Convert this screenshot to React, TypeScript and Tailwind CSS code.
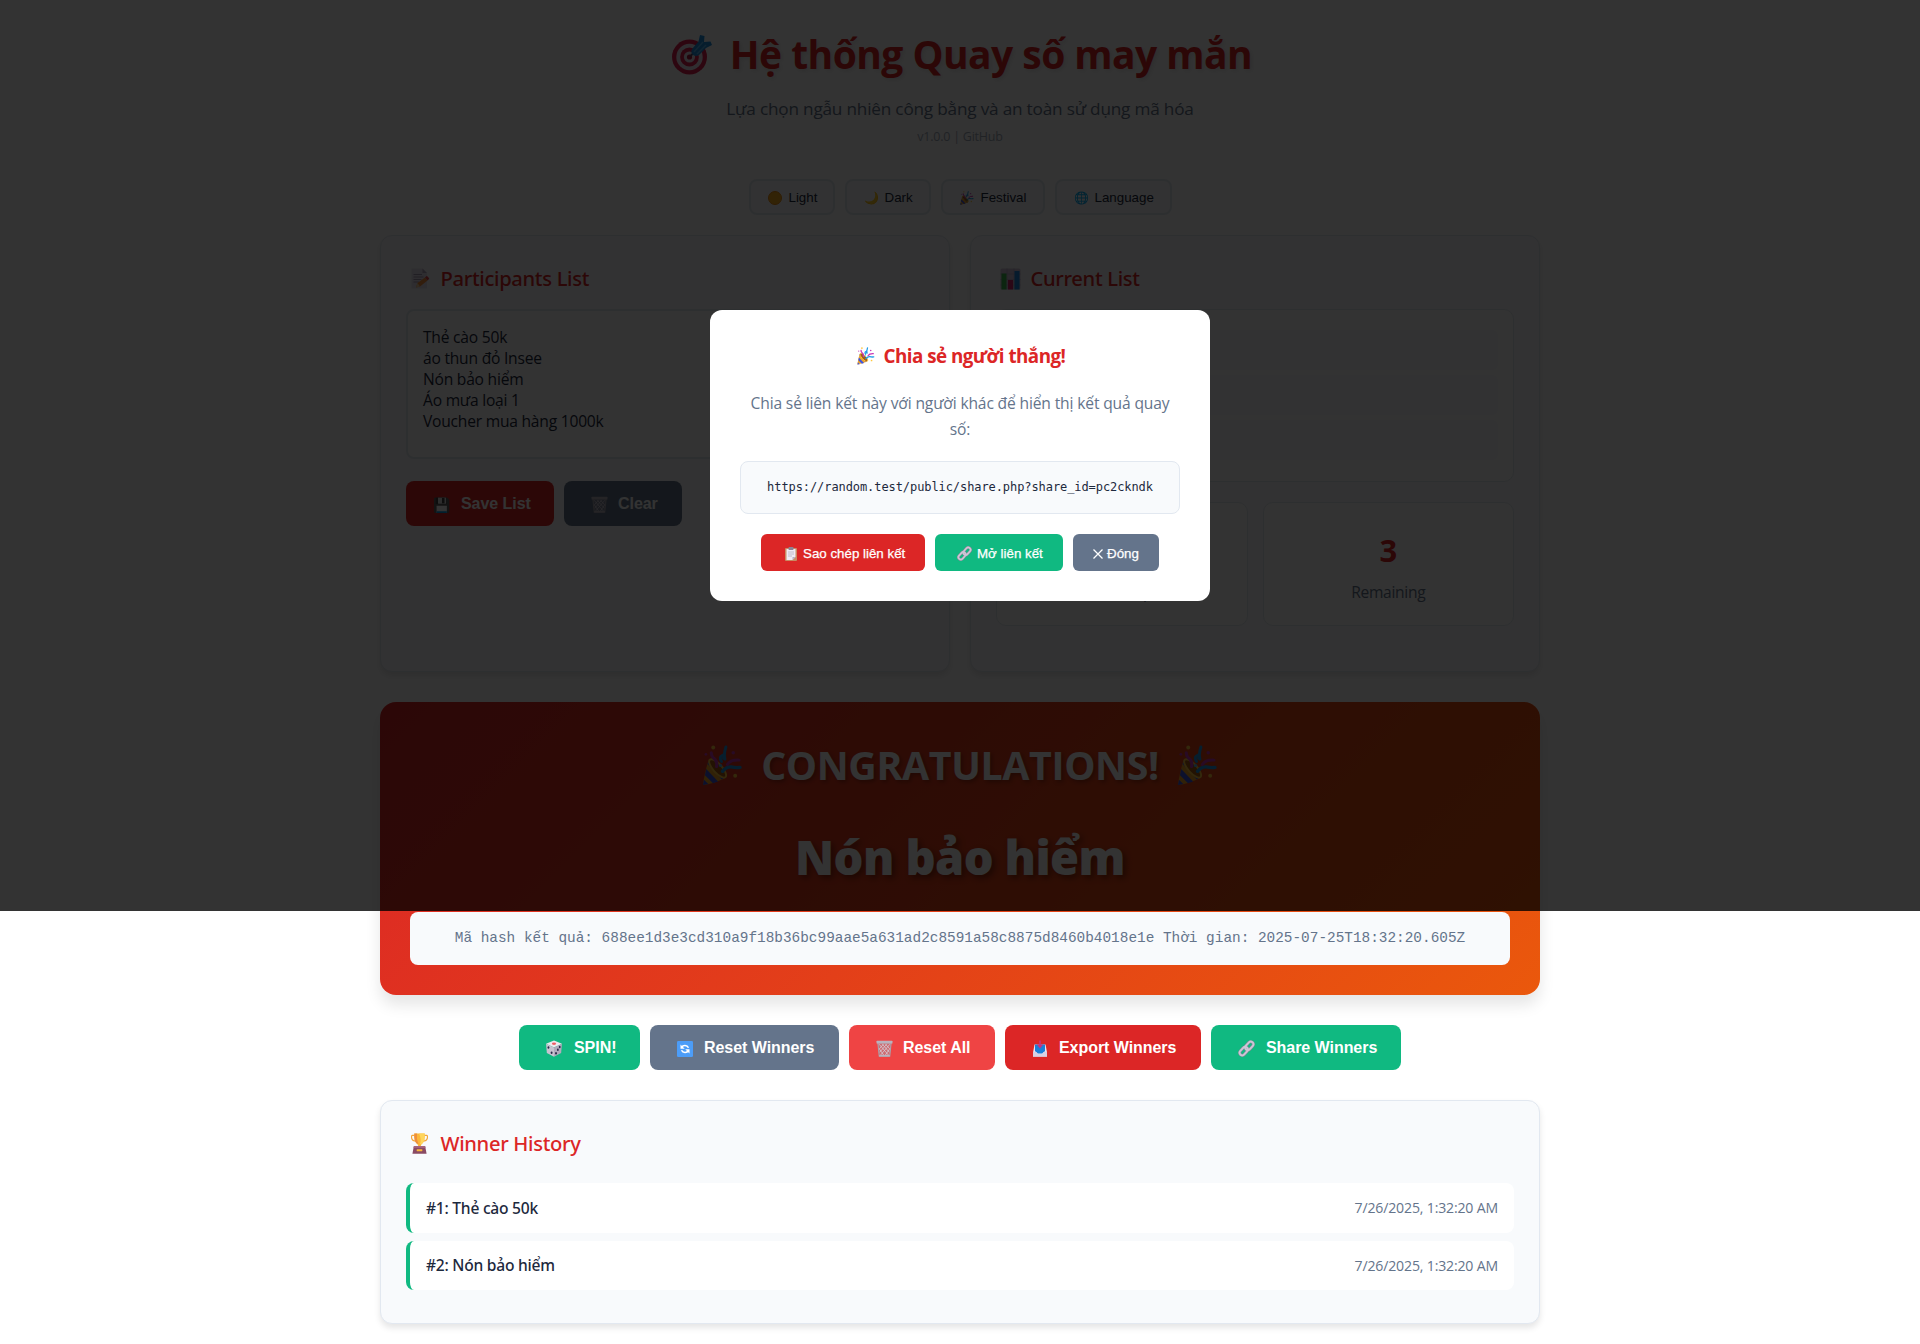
import type { ReactNode } from 'react'

const ui = "font-['Open_Sans','Noto_Sans',sans-serif]"
const arial = "font-['Liberation_Sans',Arial,sans-serif]"

function LinkIcon({ size = 16 }: { size?: number }) {
  return (
    <svg width={size} height={size} viewBox="0 0 32 32" fill="none" strokeLinecap="round">
      <g stroke="#8d8797" strokeWidth="5.6">
        <rect x="1.5" y="11" width="18" height="10" rx="5" transform="rotate(-48 10.5 16) translate(-3.5 3.5)" />
        <rect x="12.5" y="11" width="18" height="10" rx="5" transform="rotate(-48 21.5 16) translate(3.5 -3.5)" />
      </g>
      <g stroke="#cdc6d6" strokeWidth="3.6">
        <rect x="1.5" y="11" width="18" height="10" rx="5" transform="rotate(-48 10.5 16) translate(-3.5 3.5)" />
        <rect x="12.5" y="11" width="18" height="10" rx="5" transform="rotate(-48 21.5 16) translate(3.5 -3.5)" />
      </g>
    </svg>
  )
}

function TrashIcon({ size = 17 }: { size?: number }) {
  return (
    <svg width={size} height={size} viewBox="0 0 32 32" fill="none">
      <path d="M3.5 5h25l-2.6 25.5H6.1z" fill="#a39daa" fillOpacity=".45" stroke="#a8a3ad" strokeWidth="2" />
      <path d="M6 8l18 21M12 8l13 15M6.5 17l9 13M26 8L8 29M20 8L7 23M25.5 17l-9 13M18 8l8 9M14 8l-8 9" stroke="#d5d0da" strokeWidth="1.4" />
      <rect x="1" y="1.5" width="30" height="5" rx="1" fill="#b9b3bf" />
      <rect x="6" y="28" width="20" height="3" rx="1" fill="#b9b3bf" />
    </svg>
  )
}

function DiceIcon() {
  return (
    <svg width="18" height="17" viewBox="0 0 34 32">
      <path d="M17 1l15 6-15 7L2 7z" fill="#ece8ee" />
      <path d="M2 7l15 7v17.5L3.5 24.5z" fill="#c9c2d0" />
      <path d="M32 7l-15 7v17.5L30.5 24.5z" fill="#b2aabc" />
      <ellipse cx="17" cy="7" rx="4" ry="2.2" fill="#ef5b62" />
      <g fill="#2c2a4a">
        <ellipse cx="6.5" cy="14" rx="1.8" ry="2.4" />
        <ellipse cx="12.5" cy="24" rx="1.8" ry="2.4" />
        <ellipse cx="27.8" cy="13" rx="1.7" ry="2.3" />
        <ellipse cx="24.3" cy="18.5" rx="1.7" ry="2.3" />
        <ellipse cx="20.8" cy="25" rx="1.7" ry="2.3" />
      </g>
    </svg>
  )
}

function RefreshIcon() {
  return (
    <svg width="16" height="16" viewBox="0 0 32 32" fill="none">
      <rect width="32" height="32" rx="2.5" fill="#4c9df8" />
      <path d="M9.5 12.5C12 8 20 7.5 23 13.5M22.5 19.5C20 24 12 24.5 9 18.5" stroke="#fff" strokeWidth="3.2" />
      <path d="M7 7v8.5h8.5zM25 25v-8.5h-8.5z" fill="#fff" />
    </svg>
  )
}

function InboxIcon() {
  return (
    <svg width="14" height="17" viewBox="0 0 28 34">
      <path d="M3 9h22l3 16v8H0v-8z" fill="#e9e4f0" />
      <path d="M4 9h20v13l-5 5H9l-5-5z" fill="#1b7fd8" />
      <path d="M0 24h7l3 4h8l3-4h7v9.5H0z" fill="#d8d0e3" />
      <path d="M12.3 1h3.4v8h4.8L14 17 7.5 9h4.8z" fill="#c7327c" />
    </svg>
  )
}

function ClipboardIcon() {
  return (
    <svg width="12" height="14" viewBox="0 0 24 28">
      <rect x="0" y="2" width="24" height="26" rx="2" fill="#c98a62" />
      <path d="M3 4h18v16l-6 6H3z" fill="#efeaf4" />
      <path d="M21 20h-6v6z" fill="#b7aec2" />
      <rect x="7" y="0" width="10" height="6" rx="1.5" fill="#8b8495" />
      <path d="M6 10h12M6 14h12M6 18h8" stroke="#b3abbd" strokeWidth="1.5" />
    </svg>
  )
}

function MemoIcon() {
  return (
    <svg width="20" height="21" viewBox="0 0 40 42" fill="none">
      <path d="M3 1h22l9 9v31H3z" fill="#e6dfee" />
      <path d="M25 1l9 9h-9z" fill="#b3a9c0" />
      <path d="M7 13h17M7 18h20M7 23h16M7 28h11" stroke="#a79db3" strokeWidth="2" />
      <path d="M12 39l3-9 15-11 5 6-15 12z" fill="#fb923c" />
      <path d="M12 39l3-9 5 7z" fill="#f6d7a8" />
      <path d="M30 19l3-3q3 0 5.500 5.500L35 25z" fill="#e5484d" />
    </svg>
  )
}

function ChartIcon() {
  return (
    <svg width="21" height="22" viewBox="0 0 42 44">
      <rect x="1" y="1" width="40" height="42" rx="3" fill="#cfc4dc" />
      <path d="M14 1v42M28 1v42M1 12h40M1 23h40M1 34h40" stroke="#b5a9c6" strokeWidth="1.500" />
      <rect x="3" y="11" width="10" height="32" fill="#3fb950" />
      <rect x="16" y="24" width="10" height="19" fill="#d6246e" />
      <rect x="29" y="6" width="10" height="37" fill="#1f86e0" />
    </svg>
  )
}

function TargetIcon() {
  return (
    <svg width="41" height="41" viewBox="0 0 41 41" fill="none">
      <circle cx="17.5" cy="23" r="17.5" fill="#e2224f" />
      <circle cx="17.5" cy="23" r="13.2" fill="#efe6f2" />
      <circle cx="17.5" cy="23" r="9.4" fill="#e2224f" />
      <circle cx="17.5" cy="23" r="5.6" fill="#efe6f2" />
      <circle cx="17.5" cy="23" r="2.6" fill="#b0183d" />
      <path d="M18 22.5l9-9" stroke="#5a4a66" strokeWidth="1.8" />
      <path d="M19.5 18.5q-.5-2 1-4l6-7 1.5-6.5 4.5 1-.5 6 6.5-.5 1.5 3.5-6 3-7 7q-2.5 1.5-5 .5-2-1-2.5-3z" fill="#1f8fe0" />
      <path d="M22 18l9-10M25 20l9-9" stroke="#56b8f5" strokeWidth="1.5" />
    </svg>
  )
}

function PopperIcon({ size }: { size: number }) {
  return (
    <svg width={size} height={size} viewBox="0 0 40 42" fill="none">
      <path d="M5.5 16.5C3 24 1 33 0 41q10-1 23.500-7.500z" fill="#f5a623" />
      <path d="M3.3 24.5L15.5 37.3l-5.2 1.8L2 31zM5.5 16.500l1.800-.8L22.5 33l-3.300 2.400L4.600 19.500zM1 35.500L5.500 40 0 41z" fill="#3f56e0" />
      <ellipse cx="15" cy="24" rx="4.500" ry="12" transform="rotate(-42 15 24)" fill="#a85d12" stroke="#ffc83d" strokeWidth="2" />
      <path d="M14 22q1-6-3.500-9-2-1.500-2-5" stroke="#c837b8" strokeWidth="3.200" strokeLinecap="round" />
      <path d="M19 17q-3-5 1-6.500 3 0 1 3M22.500 14.500q-1.500-5 1-12.500" stroke="#1f9be8" strokeWidth="3" strokeLinecap="round" />
      <path d="M20 27q4-5 9-4.500 4 1 9 .5" stroke="#1f9be8" strokeWidth="3.400" strokeLinecap="round" />
      <path d="M25 20q3-5 12-4.500" stroke="#c837b8" strokeWidth="3" strokeLinecap="round" />
      <circle cx="10.500" cy="2.500" r="2" fill="#ffc83d" />
      <circle cx="33" cy="31.500" r="2" fill="#ffc83d" />
      <circle cx="3" cy="9.500" r="1.400" fill="#c837b8" />
      <circle cx="31" cy="8" r="1.800" fill="#c837b8" />
      <circle cx="18" cy="21" r="1.600" fill="#56b8f5" />
    </svg>
  )
}

function TrophyIcon() {
  return (
    <svg width="17" height="21" viewBox="0 0 36 44" fill="none" className="ml-px">
      <path d="M9 5H3q-2 0-2 4 1 8 10 8M27 5h6q2 0 2 4-1 8-10 8" stroke="#f3a63b" strokeWidth="2.6" />
      <path d="M7 1h22q1 16-5 21-3 2-3.5 6h-5Q15 24 12 22 6 17 7 1z" fill="#fbb83a" />
      <path d="M17 1h12q1 16-5 21-3 1.500-5 1.500 4-10-2-22.500z" fill="#ffd65c" />
      <path d="M7 1h6q-2 12 3 22-2 0-4-1Q6 17 7 1z" fill="#ee8f3c" />
      <path d="M6 28h24l3 15.500H3z" fill="#8a4a63" />
      <path d="M6 28h24l.6 3.500H5.400z" fill="#a5607a" />
      <rect x="12" y="34" width="12" height="4.500" rx="1" fill="#fbb83a" />
    </svg>
  )
}

function CloseIcon() {
  return (
    <svg width="10" height="10" viewBox="0 0 10 10" fill="none" stroke="#fff" strokeWidth="1.3">
      <path d="M.5.5l9 9M9.5.5l-9 9" />
    </svg>
  )
}

function SunIcon() {
  return (
    <svg width="14" height="14" viewBox="0 0 14 14">
      <circle cx="7" cy="7" r="6.5" fill="#fbb01f" stroke="#e98a12" />
    </svg>
  )
}

function ThemeButton({ icon, label, width }: { icon: ReactNode; label: string; width: string }) {
  return (
    <button className={`flex h-9 items-center rounded-lg border-2 border-slate-200 bg-slate-50 pl-[17px] pt-px text-[13.33px] text-slate-800 ${arial} ${width}`}>
      <span className="flex w-[21px] shrink-0 items-center text-[12px] leading-none">{icon}</span>
      {label}
    </button>
  )
}

function ActionButton({ icon, label, look, text = 'pl-[55px]' }: { icon: ReactNode; label: string; look: string; text?: string }) {
  return (
    <button className={`relative flex h-[45px] items-center rounded-lg text-base font-bold text-white ${arial} ${look} ${text}`}>
      <span className="absolute left-[26px] top-[15px] flex h-[17px] w-[18px] items-center justify-center text-[14px] leading-none">{icon}</span>
      <span className="whitespace-nowrap tracking-[-0.05px]">{label}</span>
    </button>
  )
}

function Card({ icon, title, className = '', children }: { icon: ReactNode; title: string; className?: string; children: ReactNode }) {
  return (
    <section className={`rounded-xl border border-slate-200 bg-slate-50 p-[25px] shadow-[0_4px_6px_rgba(0,0,0,0.1)] ${className}`}>
      <h2 className="flex h-[33px] items-center pt-0.5 font-['Noto_Sans',sans-serif] text-[20.2px] font-medium tracking-[-0.33px] text-[#dc2626]">
        <span className="w-[34.5px] pl-[4px] leading-none">{icon}</span>
        {title}
      </h2>
      {children}
    </section>
  )
}

function Stat({ value, label }: { value: string; label: string }) {
  return (
    <div className="h-[124px] flex-1 rounded-[10px] border border-slate-200 bg-white pt-[22px] text-center">
      <div className="h-[51px] text-[31px] font-bold leading-[51px] text-[#dc2626]">{value}</div>
      <div className="mt-[3px] h-[26px] text-[15.6px] leading-[26px] tracking-[-0.3px] text-[#64748b]">{label}</div>
    </div>
  )
}

const participants = ['Thẻ cào 50k', 'áo thun đỏ Insee', 'Nón bảo hiểm', 'Áo mưa loại 1', 'Voucher mua hàng 1000k']
const rows = [1, 2, 3]
const winners = ['#1: Thẻ cào 50k', '#2: Nón bảo hiểm']

export default function App() {
  return (
    <div className={`relative h-[1344px] overflow-hidden bg-white text-base text-slate-800 ${ui}`}>
      <main className="mx-auto w-[1160px] pt-5">
        <header className="flex flex-col items-center">
          <h1 className="flex h-16 items-center pl-1 pt-1 text-[39px] font-bold leading-[64px] tracking-[-0.54px] text-[#dc2626] [text-shadow:2px_2px_4px_rgba(0,0,0,0.1)]">
            <span className="mr-[17px]"><TargetIcon /></span>
            Hệ thống Quay số may mắn
          </h1>
          <p className="mt-[11px] h-7 text-[17.2px] leading-7 tracking-[-0.2px] text-[#64748b]">
            Lựa chọn ngẫu nhiên công bằng và an toàn sử dụng mã hóa
          </p>
          <p className="mt-1 h-5 text-[12.5px] leading-5 tracking-[-0.23px] text-[#64748b] opacity-60">v1.0.0 | GitHub</p>
        </header>

        <nav className="mt-8 flex justify-center gap-2.5">
          <ThemeButton width="w-[86px]" label="Light" icon={<SunIcon />} />
          <ThemeButton width="w-[86px]" label="Dark" icon="🌙" />
          <ThemeButton width="w-[104px]" label="Festival" icon={<PopperIcon size={14} />} />
          <ThemeButton width="w-[117px]" label="Language" icon="🌐" />
        </nav>

        <div className="mt-5 grid grid-cols-2 gap-5">
          <Card icon={<MemoIcon />} title="Participants List" className="h-[437px]">
            <div className="mt-[15px] h-[150px] rounded-lg border-2 border-slate-200 bg-white px-[15px] pt-4 text-[15.6px] leading-[21px] tracking-[-0.22px]">
              {participants.map((p) => (
                <div key={p}>{p}</div>
              ))}
            </div>
            <div className="mt-[22px] flex gap-2.5">
              <ActionButton look="bg-[#dc2626] w-[148px]" icon="💾" label="Save List" />
              <ActionButton look="bg-[#64748b] w-[118px]" icon={<TrashIcon />} label="Clear" text="pl-[54px]" />
            </div>
          </Card>
          <Card icon={<ChartIcon />} title="Current List" className="h-[437px]">
            <div className="mt-[15px] flex h-[173px] flex-col gap-[5px] rounded-[10px] border border-slate-200 bg-white px-[15px] py-5">
              {rows.map((r) => (
                <div key={r} className="h-10 rounded-md bg-slate-50" />
              ))}
            </div>
            <div className="mt-5 flex gap-[15px]">
              <Stat value="5" label="Total Participants" />
              <Stat value="3" label="Remaining" />
            </div>
          </Card>
        </div>

        <section className="mt-[30px] flex h-[293px] flex-col items-center rounded-2xl bg-linear-[135deg,#dc2626,#ea580c] px-[30px] pt-[30px] text-white shadow-[0_10px_15px_rgba(0,0,0,0.1)]">
          <h2 className="flex h-16 items-center gap-[18px] pt-0.5 text-[39.3px] font-bold leading-[64px] tracking-[-0.36px] [text-shadow:2px_2px_4px_rgba(0,0,0,0.3)]">
            <PopperIcon size={41} />
            CONGRATULATIONS!
            <PopperIcon size={41} />
          </h2>
          <div className="mt-[22px] h-[77px] text-[47px] font-extrabold leading-[78px] tracking-[-0.62px] [text-shadow:3px_3px_6px_rgba(0,0,0,0.4)]">
            Nón bảo hiểm
          </div>
          <div className="mt-[17px] h-[53px] w-full rounded-lg bg-slate-50 text-center font-['Liberation_Mono',monospace] text-[14.4px] leading-[53px] text-[#64748b]">
            Mã hash kết quả: 688ee1d3e3cd310a9f18b36bc99aae5a631ad2c8591a58c8875d8460b4018e1e Thời gian: 2025-07-25T18:32:20.605Z
          </div>
        </section>

        <div className="mt-[30px] flex justify-center gap-2.5">
          <ActionButton look="bg-[#10b981] w-[121px]" icon={<DiceIcon />} label="SPIN!" />
          <ActionButton look="bg-[#64748b] w-[189px]" icon={<RefreshIcon />} label="Reset Winners" text="pl-[54px]" />
          <ActionButton look="bg-[#ef4444] w-[146px]" icon={<TrashIcon />} label="Reset All" text="pl-[54px]" />
          <ActionButton look="bg-[#dc2626] w-[196px]" icon={<InboxIcon />} label="Export Winners" text="pl-[54px]" />
          <ActionButton look="bg-[#10b981] w-[190px]" icon={<LinkIcon size={17} />} label="Share Winners" />
        </div>

        <Card icon={<TrophyIcon />} title="Winner History" className="mt-[30px] h-[224px]">
          <ul className="mt-[24px] flex flex-col gap-2">
            {winners.map((w) => (
              <li key={w} className="flex h-[49.5px] items-center justify-between rounded-lg border-l-4 border-[#10b981] bg-white px-4">
                <span className="pt-px font-['Noto_Sans',sans-serif] text-[15.6px] font-medium tracking-[-0.24px]">{w}</span>
                <time className="text-[14.1px] tracking-[-0.17px] text-[#64748b]">7/26/2025, 1:32:20 AM</time>
              </li>
            ))}
          </ul>
        </Card>
      </main>

      <div className="absolute inset-x-0 top-0 flex h-[911px] items-center justify-center bg-black/80">
        <div className="flex h-[291px] w-[500px] flex-col items-center rounded-xl bg-white p-[30px]">
          <h3 className="flex h-[31px] items-center pl-0.5 pt-px text-[18.8px] font-bold tracking-[-0.52px] text-[#dc2626]">
            <span className="mr-[9px]"><PopperIcon size={18} /></span>
            Chia sẻ người thắng!
          </h3>
          <p className="mt-[19px] text-center text-[15.6px] leading-[26px] tracking-[-0.145px] text-[#64748b]">
            Chia sẻ liên kết này với người khác để hiển thị kết quả quay số:
          </p>
          <div className="mt-[19px] h-[53px] w-full rounded-lg border border-slate-200 bg-slate-50 text-center font-['DejaVu_Sans_Mono',monospace] text-[12px] leading-[50px] tracking-[-0.08px]">
            https://random.test/public/share.php?share_id=pc2ckndk
          </div>
          <div className={`mt-5 flex gap-2.5 text-[13.33px] text-white [-webkit-text-stroke:0.25px_#fff] ${arial}`}>
            <button className="flex h-[37px] w-[164px] items-center rounded-md bg-[#dc2626] pl-6 pt-0.5">
              <ClipboardIcon />
              <span className="ml-[6px] whitespace-nowrap">Sao chép liên kết</span>
            </button>
            <button className="flex h-[37px] w-32 items-center rounded-md bg-[#10b981] pl-[22px] pt-0.5">
              <LinkIcon size={15} />
              <span className="ml-[5px] whitespace-nowrap">Mở liên kết</span>
            </button>
            <button className="flex h-[37px] w-[86px] items-center rounded-md bg-[#64748b] pl-5 pt-0.5">
              <CloseIcon />
              <span className="ml-1">Đóng</span>
            </button>
          </div>
        </div>
      </div>
    </div>
  )
}
